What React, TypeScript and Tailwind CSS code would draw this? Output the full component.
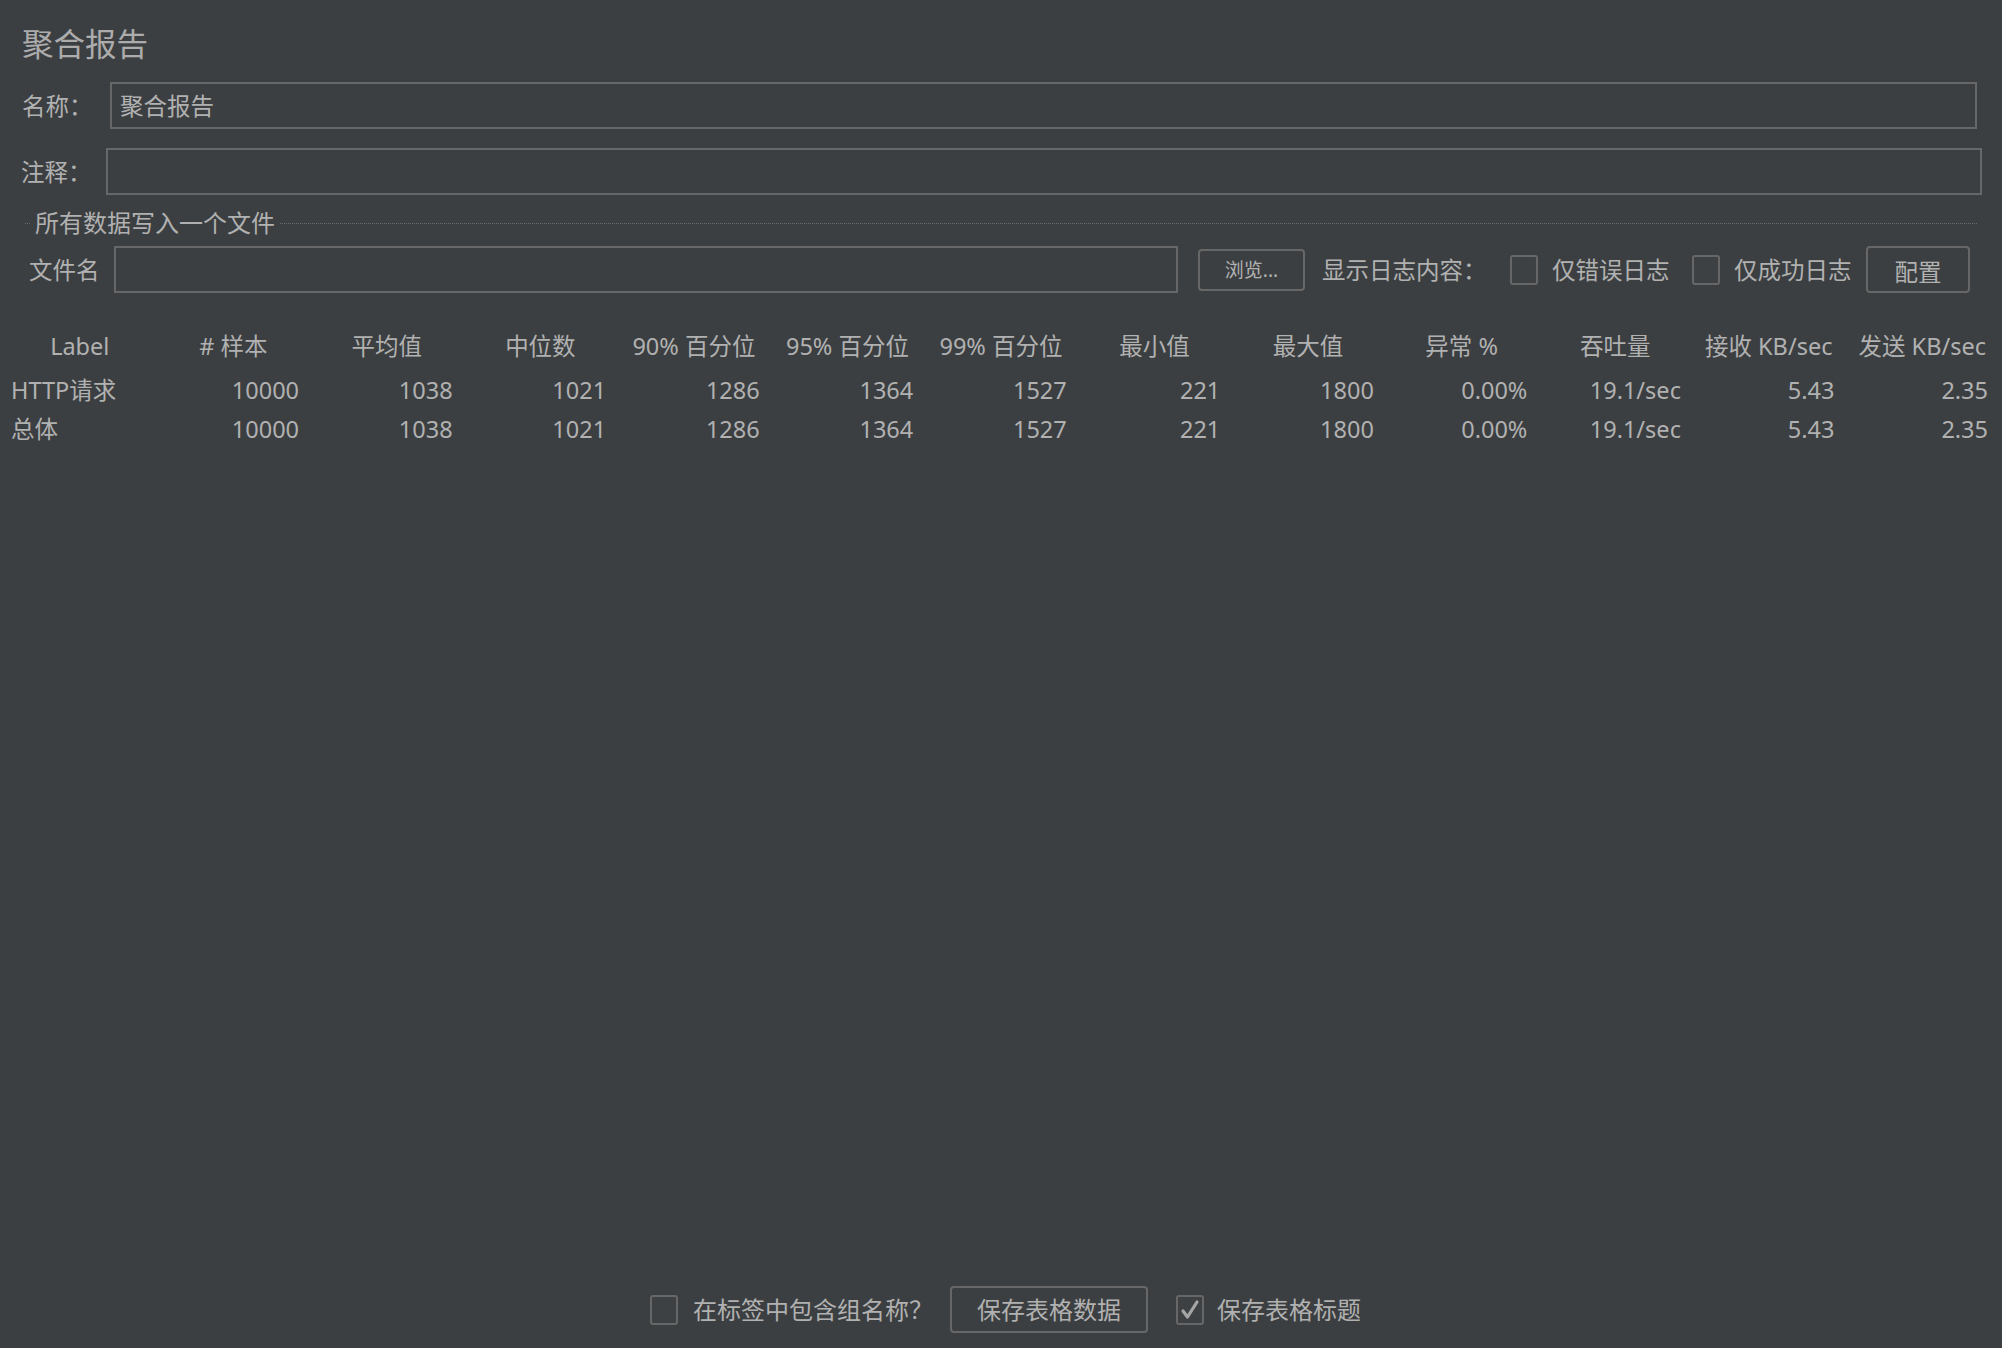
import React from "react";

const headers = [
  "Label",
  "# 样本",
  "平均值",
  "中位数",
  "90% 百分位",
  "95% 百分位",
  "99% 百分位",
  "最小值",
  "最大值",
  "异常 %",
  "吞吐量",
  "接收 KB/sec",
  "发送 KB/sec",
];

const rows = [
  ["HTTP请求", "10000", "1038", "1021", "1286", "1364", "1527", "221", "1800", "0.00%", "19.1/sec", "5.43", "2.35"],
  ["总体", "10000", "1038", "1021", "1286", "1364", "1527", "221", "1800", "0.00%", "19.1/sec", "5.43", "2.35"],
];

function CheckBox({ checked = false }: { checked?: boolean }) {
  return (
    <div className="w-[28px] h-[30px] shrink-0 border-2 border-[#676767] rounded-[3px] bg-[#3e4143] flex items-center justify-center">
      {checked && (
        <svg width="20" height="22" viewBox="0 0 20 22">
          <path d="M3 12 L7.5 18 L17 3" fill="none" stroke="#a6a6a6" strokeWidth="3.2" strokeLinecap="round" strokeLinejoin="round" />
        </svg>
      )}
    </div>
  );
}

export default function App() {
  return (
    <div className="w-[2002px] h-[1348px] overflow-hidden bg-[#3c3f41] text-[#b1b1b1] font-['Noto_Sans','Noto_Sans_CJK_SC',sans-serif] text-[23.5px] flex flex-col">
      {/* Title */}
      <div className="pt-[25px] pl-[22px] h-[62px] text-[31.5px] leading-[37px] text-[#acacac]">聚合报告</div>

      {/* Name row */}
      <div className="mt-[20px] pl-[22px] pr-[25px] flex items-center h-[47px]">
        <div className="w-[88px] shrink-0 leading-[30px]">名称：</div>
        <div className="flex-1 h-[47px] border-2 border-[#676767] flex items-center pl-[8px] leading-[30px]">聚合报告</div>
      </div>

      {/* Comment row */}
      <div className="mt-[19px] pl-[21px] pr-[20px] flex items-center h-[47px]">
        <div className="w-[85px] shrink-0 leading-[30px]">注释：</div>
        <div className="flex-1 h-[47px] border-2 border-[#676767]"></div>
      </div>

      {/* Section title */}
      <div className="mt-[16px] px-[25px] h-[24px] flex items-center">
        <div className="w-[5px] border-t border-dotted border-[#66696b]"></div>
        <div className="px-[5px] leading-[24px] whitespace-nowrap text-[24px]">所有数据写入一个文件</div>
        <div className="flex-1 border-t border-dotted border-[#66696b]"></div>
      </div>

      {/* File row */}
      <div className="mt-[11px] pl-[29px] pr-[32px] flex items-center h-[47px]">
        <div className="w-[85px] shrink-0 leading-[30px]">文件名</div>
        <div className="flex-1 h-[47px] border-2 border-[#676767]"></div>
        <div className="ml-[20px] w-[107px] h-[42px] shrink-0 border-2 border-[#676767] rounded-[4px] flex items-center justify-center text-[19px] leading-[24px]">浏览...</div>
        <div className="ml-[17px] w-[188px] shrink-0 whitespace-nowrap leading-[30px]">显示日志内容：</div>
        <div className="w-[182px] shrink-0 flex items-center">
          <CheckBox />
          <span className="ml-[14px] whitespace-nowrap leading-[30px]">仅错误日志</span>
        </div>
        <div className="w-[174px] shrink-0 flex items-center">
          <CheckBox />
          <span className="ml-[14px] whitespace-nowrap leading-[30px]">仅成功日志</span>
        </div>
        <div className="w-[104px] h-[47px] shrink-0 border-2 border-[#676767] rounded-[4px] flex justify-center items-start pt-[12px] leading-[24px]">配置</div>
      </div>

      {/* Table */}
      <div className="mt-[34px] px-[3px]">
        <div className="grid grid-cols-[repeat(13,minmax(0,1fr))] h-[38px] items-center leading-[30px]">
          {headers.map((h) => (
            <div key={h} className="text-center whitespace-nowrap">{h}</div>
          ))}
        </div>
        <div className="mt-[5px]">
          {rows.map((r, i) => (
            <div key={i} className="grid grid-cols-[repeat(13,minmax(0,1fr))] h-[39px] items-center leading-[30px]">
              {r.map((c, j) => (
                <div key={j} className={j === 0 ? "pl-[8px] whitespace-nowrap" : "text-right pr-[11px] whitespace-nowrap"}>{c}</div>
              ))}
            </div>
          ))}
        </div>
      </div>

      <div className="flex-1"></div>

      {/* Bottom row */}
      <div className="mb-[15px] h-[47px] flex items-center justify-center text-[24px]">
        <div className="flex items-center ml-[9px]">
          <CheckBox />
          <span className="ml-[15px] whitespace-nowrap leading-[30px]">在标签中包含组名称？</span>
          <div className="ml-[17px] w-[198px] h-[47px] border-2 border-[#676767] rounded-[4px] flex items-center justify-center leading-[30px]">保存表格数据</div>
          <div className="ml-[28px]"><CheckBox checked /></div>
          <span className="ml-[13px] whitespace-nowrap leading-[30px]">保存表格标题</span>
        </div>
      </div>
    </div>
  );
}
